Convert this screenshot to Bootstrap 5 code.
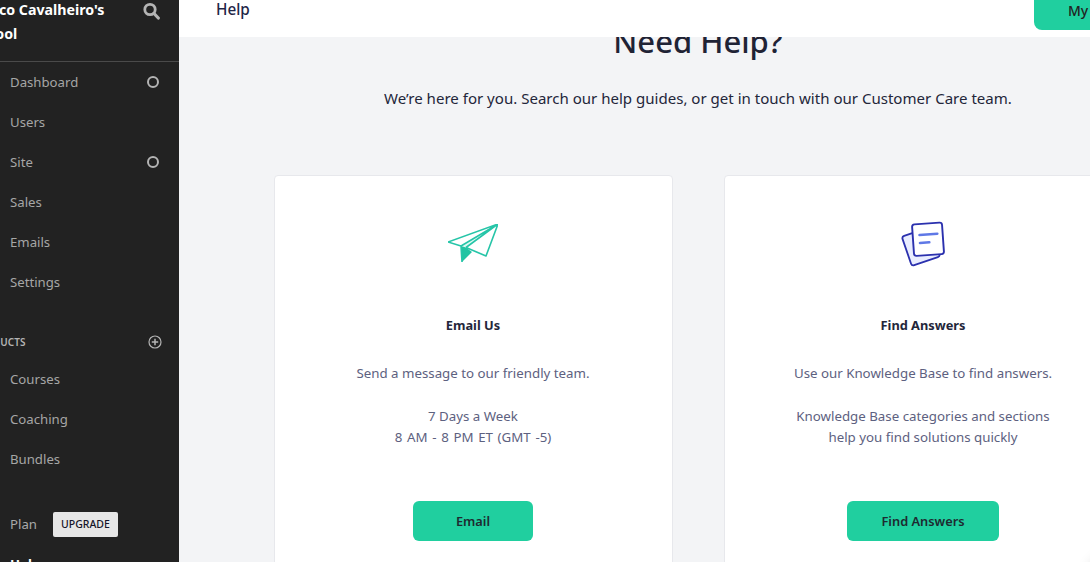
<!DOCTYPE html>
<html lang="en">
<head>
<meta charset="utf-8">
<title>Help</title>
<link href="https://cdn.jsdelivr.net/npm/bootstrap@5.3.0/dist/css/bootstrap.min.css" rel="stylesheet">
<style>
html,body{height:562px;overflow:hidden}
body{font-family:"Noto Sans","Open Sans",sans-serif;background:#f3f4f6;color:#1f2335;position:relative}
.shell{width:1090px;height:562px;overflow:hidden}
.side{width:179px;height:562px;background:#222;overflow:hidden;flex:none;color:#a9a9a9}
.side>*{flex:none}
.brandbox{border-bottom:1px solid #4a4a4a;margin-top:-3px;height:65px}
.brandname{width:135px;margin-left:-29px;padding-top:1px;color:#fff;font-weight:700;font-size:14.2px;line-height:24px;white-space:nowrap}
.searchico{margin:5px 19px 0 0}
.sideitem{height:40px;padding:2px 20px 0 10px;font-size:13.2px;color:#a6a6a6}
.ring{width:12px;height:12px;margin-top:-2px;border:2px solid #b4b4b4;border-radius:50%}
.sectionrow{height:20px;margin-top:30px;margin-bottom:7px;padding-right:17px;font-size:10px;font-weight:600;color:#b4b4b4}
.sectionname{margin-left:-28px;letter-spacing:.1px}
.planrow{margin-top:25px;height:40px;padding-left:10px;font-size:13.2px;gap:16px}
.plantext{margin-top:2px}
.upbtn{width:65px;height:25px;padding:0;background:#e6e6e6;border:0;border-radius:2px;font-size:10.5px;font-weight:500;color:#141428;line-height:25px}
.helprow{padding-left:10px;font-size:13.2px;color:#fff;font-weight:700;line-height:40px}
.mainpane{min-width:0;width:911px;overflow:hidden}
.topstrip{height:37px;background:#fff;flex:none;padding-left:37px;position:relative;z-index:2}
.toptitle{font-size:15.3px;font-weight:500;color:#1f2647;line-height:20px;margin-top:-1px}
.mybtn{position:absolute;left:855px;top:-10px;width:120px;height:40px;background:#20cf9f;border-radius:8px;font-size:14px;font-weight:500;color:#222;padding:10px 0 0 34px;white-space:nowrap}
.inner{width:848px;margin-left:95px;flex:none}
.bigtitle{margin:-16px 0 0;font-size:31px;line-height:40px;font-weight:500;color:#1f2335;text-align:center}
.subtitle{margin:24.5px 0 0;font-size:15.05px;line-height:24px;text-align:center;color:#23263a}
.cardrow{margin-top:65.5px;gap:51px}
.helpcard{width:399px;height:430px;flex:none;background:#fff;border:1px solid #e7e8ec;border-radius:4px;padding:43px 1px 0 0;text-align:center}
.iconslot{height:49px}
.cardhead{margin:47px 0 28px;font-size:12.8px;font-weight:700;line-height:20px;color:#23263a}
.cardtext{margin:0;height:138px;font-size:13.3px;line-height:21.4px;color:#5d6180}
.widewords{word-spacing:1.2px}
.gobtn{height:40px;background:#20cf9f;border:0;border-radius:6px;font-size:12.8px;font-weight:600;color:#1e2a30;padding:2px 0 0}
.gobtn:hover{background:#20cf9f}
.wide120{width:120px}
.wide152{width:152px}
.chatglow{position:absolute;left:1086px;top:552px;width:60px;height:60px;border-radius:50%;background:#fff;box-shadow:0 0 14px rgba(0,0,0,.12)}
</style>
</head>
<body>
<div class="shell d-flex">
  <aside class="side d-flex flex-column">
    <div class="brandbox d-flex justify-content-between align-items-start">
      <div class="brandname">Marco Cavalheiro's<br>School</div>
      <svg class="searchico" width="17" height="18" viewBox="0 0 17 18" aria-hidden="true"><circle cx="7" cy="7.5" r="5.2" fill="none" stroke="#b4b4b4" stroke-width="2.8"/><path d="M11 11.5L15.3 16" stroke="#b4b4b4" stroke-width="3.2" stroke-linecap="round"/></svg>
    </div>
    <div class="sideitem d-flex align-items-center justify-content-between">Dashboard<span class="ring"></span></div>
    <div class="sideitem d-flex align-items-center">Users</div>
    <div class="sideitem d-flex align-items-center justify-content-between">Site<span class="ring"></span></div>
    <div class="sideitem d-flex align-items-center">Sales</div>
    <div class="sideitem d-flex align-items-center">Emails</div>
    <div class="sideitem d-flex align-items-center">Settings</div>
    <div class="sectionrow d-flex align-items-center justify-content-between">
      <span class="sectionname">PRODUCTS</span>
      <svg width="14" height="14" viewBox="0 0 14 14" aria-hidden="true"><circle cx="7" cy="7" r="6" fill="none" stroke="#b4b4b4" stroke-width="1.2"/><path d="M7 3.8V10.2M3.8 7H10.2" stroke="#b4b4b4" stroke-width="1.5"/></svg>
    </div>
    <div class="sideitem d-flex align-items-center">Courses</div>
    <div class="sideitem d-flex align-items-center">Coaching</div>
    <div class="sideitem d-flex align-items-center">Bundles</div>
    <div class="planrow d-flex align-items-center"><span class="plantext">Plan</span><button class="upbtn" type="button">UPGRADE</button></div>
    <div class="helprow">Help</div>
  </aside>
  <main class="mainpane d-flex flex-column">
    <div class="topstrip d-flex align-items-start">
      <div class="toptitle">Help</div>
      <div class="mybtn">My Account</div>
    </div>
    <div class="inner">
      <h1 class="bigtitle">Need Help?</h1>
      <p class="subtitle">We’re here for you. Search our help guides, or get in touch with our Customer Care team.</p>
      <div class="cardrow d-flex">
        <section class="helpcard">
          <div class="iconslot d-flex align-items-center justify-content-center">
            <svg width="50" height="39" viewBox="0 0 50 39" aria-hidden="true">
              <path d="M13 22L50 0L18 23.5L38 32Z" fill="#dffaf3"/>
              <path d="M13 22L14 38L24 28L18 23.5Z" fill="#22c4a3"/>
              <path d="M50 0L0 18L13 22ZM13 22L14 38M50 0L38 32L18 23.5M50 0L18 23.5" fill="none" stroke="#26c5a8" stroke-width="1.6" stroke-linejoin="round"/>
            </svg>
          </div>
          <div class="cardhead">Email Us</div>
          <p class="cardtext">Send a message to our friendly team.<br><br>7 Days a Week<br><span class="widewords">8 AM - 8 PM ET (GMT -5)</span></p>
          <button class="btn gobtn wide120" type="button">Email</button>
        </section>
        <section class="helpcard">
          <div class="iconslot d-flex align-items-center justify-content-center">
            <svg width="46" height="48" viewBox="0 0 46 48" aria-hidden="true">
              <rect x="6" y="11" width="30" height="31" rx="2.5" transform="rotate(-19 21 26.5)" fill="#e9edff" stroke="#2b31ae" stroke-width="1.8"/>
              <rect x="13" y="3.5" width="30" height="31.5" rx="2.5" transform="rotate(-4 28 19)" fill="#fff" stroke="#2b31ae" stroke-width="1.9"/>
              <path d="M19.5 15L37.3 13.7M20 23L29.3 22.3" stroke="#5f78e6" stroke-width="2.6" stroke-linecap="round"/>
            </svg>
          </div>
          <div class="cardhead">Find Answers</div>
          <p class="cardtext">Use our Knowledge Base to find answers.<br><br>Knowledge Base categories and sections<br>help you find solutions quickly</p>
          <button class="btn gobtn wide152" type="button">Find Answers</button>
        </section>
      </div>
    </div>
  </main>
</div>
<div class="chatglow"></div>
</body>
</html>
